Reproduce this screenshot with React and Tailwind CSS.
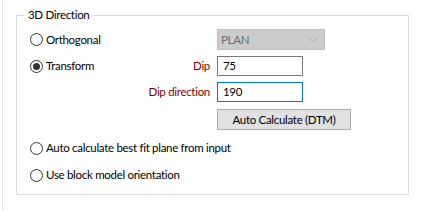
import React from "react";

function Radio({ checked }) {
  return (
    <span className="relative flex h-[13px] w-[13px] shrink-0 items-center justify-center rounded-full border border-[#333333] bg-white">
      {checked && <span className="h-[7px] w-[7px] rounded-full bg-[#333333]" />}
    </span>
  );
}

function RadioLabel({ checked, children }) {
  return (
    <div className="flex items-center">
      <Radio checked={checked} />
      <span className="ml-[3px] text-black">{children}</span>
    </div>
  );
}

export default function App() {
  return (
    <div
      className="h-[211px] w-[423px] overflow-hidden bg-white text-[11.5px] leading-[16px] tracking-[-0.3px]"
      style={{ fontFamily: 'Lato, "Liberation Sans", sans-serif' }}
    >
      <div className="ml-[2px] h-[211px] border-l border-[#e3e3e3] pl-[13px] pt-[15px]">
        <div className="relative h-[180px] w-[393px] border border-[#dcdcdc] pl-[13px] pt-[13px]">
          <span className="absolute left-[7px] top-[-9px] bg-white px-[4px] text-black">3D Direction</span>

          <div className="flex h-[21px] items-center">
            <div className="w-[187px]">
              <RadioLabel>Orthogonal</RadioLabel>
            </div>
            <div className="flex h-[21px] w-[108px] items-center justify-between border border-[#bfbfbf] bg-[#cccccc] pl-[3px] pr-[6px] text-[#6d6d6d]">
              <span>PLAN</span>
              <svg width="10" height="6" viewBox="0 0 10 6">
                <path d="M0.5 0.5 L5 5 L9.5 0.5" fill="none" stroke="#a6a6a6" strokeWidth="1" />
              </svg>
            </div>
          </div>

          <div className="mt-[6px] flex h-[20px] items-center">
            <div className="flex w-[187px] items-center justify-between pr-[7px]">
              <RadioLabel checked>Transform</RadioLabel>
              <span className="text-[#800000]">Dip</span>
            </div>
            <div className="flex h-[20px] w-[86px] items-center border border-[#7a7a7a] pl-[5px] text-black">75</div>
          </div>

          <div className="mt-[6px] flex h-[20px] items-center">
            <div className="flex w-[187px] justify-end pr-[7px]">
              <span className="text-[#800000]">Dip direction</span>
            </div>
            <div className="flex h-[20px] w-[86px] items-center border border-[#0078d7] pl-[5px] text-black">190</div>
          </div>

          <div className="mt-[7px] flex h-[21px] items-center">
            <div className="w-[187px]" />
            <div className="flex h-[21px] w-[134px] items-center justify-center border border-[#adadad] bg-[#e1e1e1] text-black">
              Auto Calculate (DTM)
            </div>
          </div>

          <div className="mt-[8px] flex h-[20px] items-center">
            <RadioLabel>Auto calculate best fit plane from input</RadioLabel>
          </div>

          <div className="mt-[7px] flex h-[20px] items-center">
            <RadioLabel>Use block model orientation</RadioLabel>
          </div>
        </div>
      </div>
    </div>
  );
}
